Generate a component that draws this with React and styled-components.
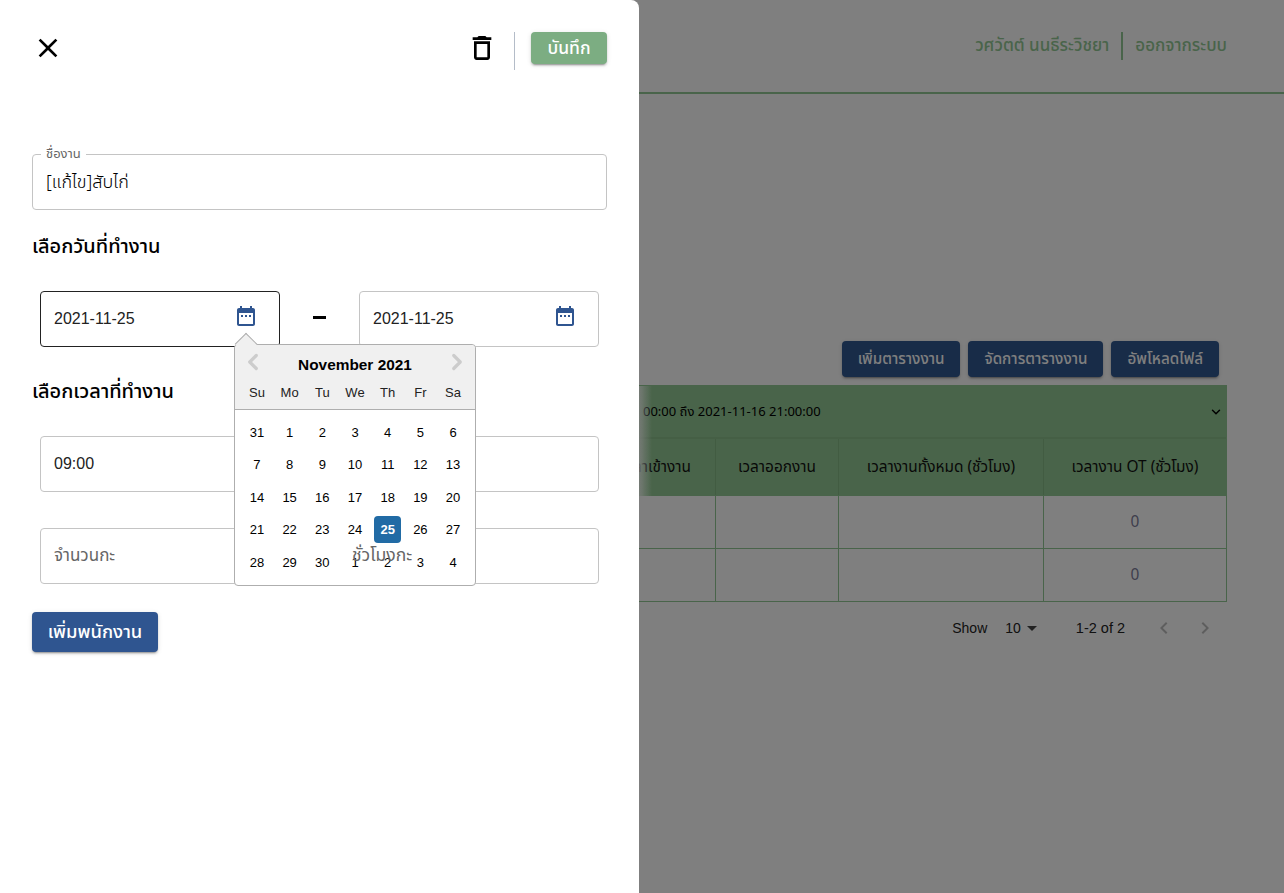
import React from 'react';
import styled, { createGlobalStyle } from 'styled-components';
import { ChevronLeft, ChevronRight, ChevronDown } from 'lucide-react';

const THAI = `"Noto Sans Thai", "Noto Sans", "DejaVu Sans", sans-serif`;
const ARIAL = `"Liberation Sans", Arial, sans-serif`;
const GREEN = '#93c994';
const RAISED = `0 3px 1px -2px rgba(0, 0, 0, 0.2), 0 2px 2px rgba(0, 0, 0, 0.14), 0 1px 5px rgba(0, 0, 0, 0.12)`;

const GlobalStyle = createGlobalStyle`
  html, body {
    margin: 0;
    height: 100%;
    background: #fff;
    overflow: hidden;
  }
  * {
    box-sizing: border-box;
  }
`;

const Page = styled.div`
  width: 1284px;
  height: 893px;
  font-family: ${ARIAL};
  overflow: hidden;
`;

const TopBar = styled.header`
  height: 94px;
  border-bottom: 2px solid ${GREEN};
  display: flex;
  justify-content: flex-end;
  align-items: flex-start;
  padding: 32px 57px 0 0;
  font-family: ${THAI};
  font-size: 17px;
  font-weight: 500;
  color: ${GREEN};
`;

const TopLink = styled.div`
  height: 28px;
  line-height: 29px;
  padding: ${(p) => (p.$last ? '0 0 0 12px' : '0 12px 0 0')};
  border-right: ${(p) => (p.$last ? 'none' : `2px solid ${GREEN}`)};
`;

const Toolbar = styled.div`
  margin-top: 247px;
  display: flex;
  justify-content: flex-end;
  gap: 8px;
  padding-right: 65px;
`;

const NavyButton = styled.button`
  height: 36px;
  padding: 0 16px;
  border: none;
  border-radius: 4px;
  background: #305890;
  color: #fff;
  font-family: ${THAI};
  font-size: 15.2px;
  font-weight: 500;
  box-shadow: ${RAISED};
`;

const Table = styled.div`
  margin: 8px 57px 0 57px;
  border: 1px solid ${GREEN};
  border-top: none;
  background: #fff;
`;

const GroupRow = styled.div`
  height: 54px;
  background: ${GREEN};
  border-bottom: 2px solid #8abf8b;
  display: flex;
  align-items: center;
  justify-content: flex-end;
  padding: 2px 3px 0 0;
  font-family: ${THAI};
  font-size: 13px;
  color: #000;
`;

const GroupLabel = styled.span`
  margin-right: auto;
  padding-left: 585px;
  white-space: nowrap;
`;

const Row = styled.div`
  display: grid;
  grid-template-columns: 1fr 123px 205px 183px;
  height: ${(p) => p.$height}px;
  background: ${(p) => (p.$head ? GREEN : '#fff')};
  border-bottom: ${(p) => (p.$end ? 'none' : `1px solid ${GREEN}`)};
`;

const Cell = styled.div`
  display: flex;
  align-items: center;
  justify-content: ${(p) => (p.$left ? 'flex-end' : 'center')};
  padding-right: ${(p) => (p.$left ? '24px' : '0')};
  border-left: ${(p) => (p.$first ? 'none' : `1px solid ${p.$head ? '#84b885' : GREEN}`)};
  font-family: ${THAI};
  font-size: 15.4px;
  color: ${(p) => (p.$muted ? '#7d7d99' : '#111')};
`;

const Pagination = styled.div`
  height: 52px;
  display: flex;
  align-items: center;
  justify-content: flex-end;
  padding-right: 67px;
  font-size: 14px;
  color: #222;
`;

const PageSize = styled.span`
  margin-left: 18px;
  display: flex;
  align-items: center;
  gap: 6px;
`;

const Caret = styled.span`
  width: 0;
  height: 0;
  border-left: 5px solid transparent;
  border-right: 5px solid transparent;
  border-top: 5px solid #444;
`;

const PageCount = styled.span`
  margin: 0 27px 0 39px;
  font-size: 14.5px;
  white-space: nowrap;
`;

const PagerIcons = styled.span`
  display: flex;
  gap: 17px;
  color: #bdbdbd;
`;

const Backdrop = styled.div`
  position: fixed;
  inset: 0;
  background: rgba(0, 0, 0, 0.5);
`;

const TableFade = styled.div`
  position: fixed;
  left: 639px;
  top: 386px;
  width: 13px;
  height: 110px;
  background: linear-gradient(to right, rgba(128, 128, 128, 0.8), rgba(128, 128, 128, 0));
`;

const Drawer = styled.aside`
  position: fixed;
  left: 0;
  top: 0;
  width: 639px;
  height: 893px;
  background: #fff;
  border-radius: 0 8px 0 0;
  padding: 32px 32px 0;
  font-family: ${THAI};
`;

const DrawerHead = styled.div`
  height: 38px;
  display: flex;
  align-items: flex-start;
`;

const IconButton = styled.button`
  padding: 0;
  border: none;
  background: none;
  display: flex;
  color: #000;
`;

const CloseButton = styled(IconButton)`
  margin-right: auto;
`;

const Divider = styled.span`
  width: 1px;
  height: 38px;
  background: #b4bcc8;
  margin: 0 16px;
`;

const SaveButton = styled.button`
  height: 32px;
  width: 76px;
  padding: 0;
  border: none;
  border-radius: 4px;
  background: #7cad82;
  color: #fff;
  font-family: ${THAI};
  font-size: 17.5px;
  font-weight: 500;
  box-shadow: ${RAISED};
`;

const Field = styled.div`
  position: relative;
  height: 56px;
  border: 1px solid ${(p) => (p.$focus ? '#222' : '#c4c4c4')};
  border-radius: 4px;
  display: flex;
  align-items: center;
  padding: 0 13px;
  font-size: 16px;
  color: #222;
  background: #fff;
`;

const NameField = styled(Field)`
  margin-top: 84px;
  font-size: 18px;
  font-weight: 300;
  color: #000;
`;

const FieldLegend = styled.span`
  position: absolute;
  left: 8px;
  top: -9px;
  padding: 0 5px;
  background: #fff;
  font-size: 13px;
  font-weight: 400;
  line-height: 16px;
  color: #666;
`;

const SectionTitle = styled.h2`
  margin: 0;
  font-size: 20px;
  font-weight: 500;
  line-height: 28px;
  color: #000;
`;

const DateTitle = styled(SectionTitle)`
  margin-top: 23px;
`;

const TimeTitle = styled(SectionTitle)`
  margin-top: 31px;
`;

const Pair = styled.div`
  display: grid;
  grid-template-columns: 240px 240px;
  justify-content: space-between;
  padding: 0 8px;
  margin-top: ${(p) => p.$top}px;
`;

const Span = styled.div`
  padding: 0 8px;
  margin-top: ${(p) => p.$top}px;
`;

const DateValue = styled.span`
  font-family: ${ARIAL};
  flex: 1;
  margin-top: -1px;
`;

const CalendarSlot = styled.span`
  display: flex;
  margin: -6px 8px 0 0;
`;

const Dash = styled.span`
  position: absolute;
  left: 313px;
  top: 316px;
  width: 13px;
  height: 3px;
  background: #000;
`;

const MutedText = styled.span`
  color: #666;
  font-size: 17px;
`;

const AddButton = styled.button`
  margin-top: 28px;
  height: 40px;
  width: 126px;
  padding: 0;
  border: none;
  border-radius: 4px;
  background: #2f5590;
  color: #fff;
  font-family: ${THAI};
  font-size: 18.4px;
  font-weight: 500;
  box-shadow: ${RAISED};
`;

const Picker = styled.div`
  position: absolute;
  left: 234px;
  top: 344px;
  width: 242px;
  height: 242px;
  background: #fff;
  border: 1px solid #aeaeae;
  border-radius: 4px;
  font-family: ${ARIAL};
  color: #000;
`;

const PickerArrow = styled.span`
  position: absolute;
  top: -9px;
  left: 3px;
  width: 16px;
  height: 16px;
  transform: rotate(45deg);
  background: #f0f0f0;
  border-left: 1px solid #aeaeae;
  border-top: 1px solid #aeaeae;
`;

const PickerHead = styled.div`
  position: relative;
  height: 65px;
  background: #f0f0f0;
  border-bottom: 1px solid #aeaeae;
  border-radius: 4px 4px 0 0;
  padding-top: 11px;
  text-align: center;
`;

const Month = styled.div`
  font-size: 15.4px;
  font-weight: 700;
  line-height: 18px;
`;

const PickerNav = styled.span`
  position: absolute;
  top: 4px;
  ${(p) => (p.$next ? 'right: 5px' : 'left: 5px')};
  display: flex;
  color: #ccc;
`;

const Week = styled.div`
  display: grid;
  grid-template-columns: repeat(7, 32.7px);
  justify-content: center;
  justify-items: center;
  align-items: center;
  height: ${(p) => p.$height}px;
  font-size: 13px;
`;

const WeekHead = styled(Week)`
  margin-top: 6px;
  color: #222;
`;

const Days = styled.div`
  padding-top: 6px;
`;

const Day = styled.span`
  width: 27px;
  height: 27px;
  line-height: 27px;
  text-align: center;
  border-radius: 4px;
  background: ${(p) => (p.$selected ? '#216ba5' : 'transparent')};
  color: ${(p) => (p.$selected ? '#fff' : '#000')};
  font-weight: ${(p) => (p.$selected ? 700 : 400)};
`;

const HoursLabel = styled.span`
  position: absolute;
  left: 352px;
  top: 546px;
  font-size: 17.5px;
  line-height: 20px;
  color: #666;
`;

const CloseIcon = () => (
  <svg width="32" height="32" viewBox="0 0 24 24" fill="currentColor">
    <path d="M19 6.41 17.59 5 12 10.59 6.41 5 5 6.41 10.59 12 5 17.59 6.41 19 12 13.41 17.59 19 19 17.59 13.41 12z" />
  </svg>
);

const TrashIcon = () => (
  <svg width="32" height="32" viewBox="0 0 24 24" fill="currentColor">
    <path d="M6 19c0 1.1.9 2 2 2h8c1.1 0 2-.9 2-2V7H6v12zM8 9h8v10H8V9zm7.5-5-1-1h-5l-1 1H5v2h14V4z" />
  </svg>
);

const CalendarIcon = () => (
  <svg width="24" height="24" viewBox="0 0 24 24" fill="#2f5590">
    <path d="M9 11H7v2h2v-2zm4 0h-2v2h2v-2zm4 0h-2v2h2v-2zm2-7h-1V2h-2v2H8V2H6v2H5c-1.11 0-1.99.9-1.99 2L3 20c0 1.1.89 2 2 2h14c1.1 0 2-.9 2-2V6c0-1.1-.9-2-2-2zm0 16H5V9h14v11z" />
  </svg>
);

const PagerPrev = () => (
  <svg width="24" height="24" viewBox="0 0 24 24" fill="currentColor">
    <path d="M15.41 7.41 14 6l-6 6 6 6 1.41-1.41L10.83 12z" />
  </svg>
);

const PagerNext = () => (
  <svg width="24" height="24" viewBox="0 0 24 24" fill="currentColor">
    <path d="M10 6 8.59 7.41 13.17 12l-4.58 4.59L10 18l6-6z" />
  </svg>
);

const WEEKDAYS = ['Su', 'Mo', 'Tu', 'We', 'Th', 'Fr', 'Sa'];
const WEEKS = [
  [31, 1, 2, 3, 4, 5, 6],
  [7, 8, 9, 10, 11, 12, 13],
  [14, 15, 16, 17, 18, 19, 20],
  [21, 22, 23, 24, 25, 26, 27],
  [28, 29, 30, 1, 2, 3, 4],
];

export default function App() {
  return (
    <Page>
      <GlobalStyle />
      <TopBar>
        <TopLink>วศวัตต์ นนธีระวิชยา</TopLink>
        <TopLink $last>ออกจากระบบ</TopLink>
      </TopBar>
      <Toolbar>
        <NavyButton>เพิ่มตารางงาน</NavyButton>
        <NavyButton>จัดการตารางงาน</NavyButton>
        <NavyButton>อัพโหลดไฟล์</NavyButton>
      </Toolbar>
      <Table>
        <GroupRow>
          <GroupLabel>00:00 ถึง 2021-11-16 21:00:00</GroupLabel>
          <ChevronDown size={14} strokeWidth={2.5} />
        </GroupRow>
        <Row $head $height={57}>
          <Cell $first $left>เวลาเข้างาน</Cell>
          <Cell $head>เวลาออกงาน</Cell>
          <Cell $head>เวลางานทั้งหมด (ชั่วโมง)</Cell>
          <Cell $head>เวลางาน OT (ชั่วโมง)</Cell>
        </Row>
        <Row $height={53}>
          <Cell $first />
          <Cell />
          <Cell />
          <Cell $muted>0</Cell>
        </Row>
        <Row $end $height={52}>
          <Cell $first />
          <Cell />
          <Cell />
          <Cell $muted>0</Cell>
        </Row>
      </Table>
      <Pagination>
        Show
        <PageSize>
          10 <Caret />
        </PageSize>
        <PageCount>1-2 of 2</PageCount>
        <PagerIcons>
          <PagerPrev />
          <PagerNext />
        </PagerIcons>
      </Pagination>

      <Backdrop />
      <TableFade />

      <Drawer>
        <DrawerHead>
          <CloseButton aria-label="close">
            <CloseIcon />
          </CloseButton>
          <IconButton aria-label="delete">
            <TrashIcon />
          </IconButton>
          <Divider />
          <SaveButton>บันทึก</SaveButton>
        </DrawerHead>

        <NameField>
          <FieldLegend>ชื่องาน</FieldLegend>
          [แก้ไข]สับไก่
        </NameField>

        <DateTitle>เลือกวันที่ทำงาน</DateTitle>
        <Pair $top={30}>
          <Field $focus>
            <DateValue>2021-11-25</DateValue>
            <CalendarSlot>
              <CalendarIcon />
            </CalendarSlot>
          </Field>
          <Field>
            <DateValue>2021-11-25</DateValue>
            <CalendarSlot>
              <CalendarIcon />
            </CalendarSlot>
          </Field>
        </Pair>
        <Dash />

        <TimeTitle>เลือกเวลาที่ทำงาน</TimeTitle>
        <Span $top={30}>
          <Field>
            <DateValue>09:00</DateValue>
          </Field>
        </Span>
        <Span $top={36}>
          <Field>
            <MutedText>จำนวนกะ</MutedText>
          </Field>
        </Span>
        <AddButton>เพิ่มพนักงาน</AddButton>

        <Picker>
          <PickerArrow />
          <PickerHead>
            <PickerNav>
              <ChevronLeft size={26} strokeWidth={3} />
            </PickerNav>
            <PickerNav $next>
              <ChevronRight size={26} strokeWidth={3} />
            </PickerNav>
            <Month>November 2021</Month>
            <WeekHead $height={24}>
              {WEEKDAYS.map((d) => (
                <span key={d}>{d}</span>
              ))}
            </WeekHead>
          </PickerHead>
          <Days>
            {WEEKS.map((week) => (
              <Week key={week[0]} $height={32.5}>
                {week.map((d) => (
                  <Day key={d} $selected={d === 25}>
                    {d}
                  </Day>
                ))}
              </Week>
            ))}
          </Days>
        </Picker>
        <HoursLabel>ชั่วโมงกะ</HoursLabel>
      </Drawer>
    </Page>
  );
}
